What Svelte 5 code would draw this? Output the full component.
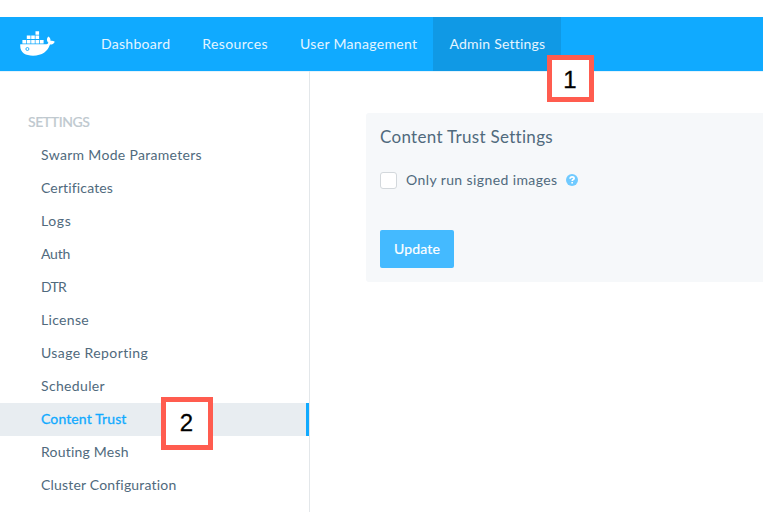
<script>
  const nav = [
    { label: 'Dashboard', x: 69.3 },
    { label: 'Resources', x: 65.7 },
    { label: 'User Management', x: 117.4 },
    { label: 'Admin Settings', x: 95.6, active: true }
  ];
  const items = [
    { label: 'Swarm Mode Parameters', x: 161 },
    { label: 'Certificates', x: 72 },
    { label: 'Logs', x: 30.5 },
    { label: 'Auth', x: 29 },
    { label: 'DTR', x: 25 },
    { label: 'License', x: 48 },
    { label: 'Usage Reporting', x: 107.5 },
    { label: 'Scheduler', x: 64 },
    { label: 'Content Trust', x: 85.5, active: true },
    { label: 'Routing Mesh', x: 88 },
    { label: 'Cluster Configuration', x: 135.5 }
  ];

  // Tracks a label out so that its text spans the given width.
  function span(node, width) {
    const natural = node.getBoundingClientRect().width;
    node.style.letterSpacing = `${(width - natural) / node.textContent.length}px`;
  }
</script>

<div class="page">
  <header>
    <svg class="logo" width="36" height="27" viewBox="0 0 36 27" fill="#fff">
      <path d="M.3 14.200H25.300c1.600 0 2.600-.5 3.100-1.500-1.900-1.800-2-4.300-.1-6.200 1.700 1.100 2.400 2.700 2.300 4.400 1.400-.3 2.900-.1 4.200.8-.9 1.900-2.500 2.900-4.800 2.900C27.600 21.500 22.300 25.700 13 25.700 5.300 25.700-.6 22.700.3 14.200Z" />
      <path d="M2.400 10h3.700v3.400H2.400zM6.800 10h3.700v3.400H6.800zM11.200 10h3.600v3.400h-3.600zM15.500 10h3.600v3.400h-3.600zM19.800 10h3.800v3.400h-3.800zM6.800 5.600h3.700V9H6.800zM11.200 5.600h3.600V9h-3.600zM15.500 5.600h3.600V9h-3.600zM15.500 1.200h3.600v3.500h-3.600z" />
      <circle cx="7.400" cy="19" r="1.500" fill="#fff" stroke="#10aaff" stroke-width=".9" />
    </svg>
    <nav>
      {#each nav as n}
        <a class:active={n.active}><span use:span={n.x}>{n.label}</span></a>
      {/each}
    </nav>
  </header>
  <div class="body">
    <aside>
      <h3><span use:span={61.5}>SETTINGS</span></h3>
      {#each items as i}
        <a class:active={i.active}><span use:span={i.x}>{i.label}</span></a>
      {/each}
    </aside>
    <main>
      <section>
        <h2><span use:span={172.5}>Content Trust Settings</span></h2>
        <div class="option">
          <i class="box"></i>
          <span use:span={151.5}>Only run signed images</span>
          <svg width="12" height="12" viewBox="0 0 12 12">
            <circle cx="6" cy="6" r="6" fill="#70caff" />
            <path d="M4.100 4.700C4.200 3.300 5 2.800 6.100 2.800c1.200 0 2 .6 2 1.600C8.100 5.700 6.200 5.500 6.200 7" fill="none" stroke="#fff" stroke-width="1.700" />
            <path d="M5.300 7.900H7v1.500H5.300z" fill="#fff" />
          </svg>
        </div>
        <button><span use:span={46}>Update</span></button>
      </section>
    </main>
  </div>
  <div class="callout one">1</div>
  <div class="callout two">2</div>
</div>

<style>
  .page {
    position: relative;
    width: 763px;
    height: 512px;
    overflow: hidden;
    box-sizing: border-box;
    padding-top: 17px;
    display: flex;
    flex-direction: column;
    background: #fff;
    color: #506a7d;
    font: 14px/20px Lato, 'Open Sans', sans-serif;
  }
  span { white-space: nowrap; }
  header {
    flex: none;
    height: 54px;
    display: flex;
    background: #10aaff;
    box-shadow: 0 1px #e4f3fc;
  }
  .logo { margin: 13px 0 0 20px; flex: none; }
  nav { display: flex; margin-left: 29px; }
  nav a {
    display: flex;
    align-items: center;
    padding: 0 16px 1px;
    color: #e4f5ff;
  }
  nav a.active { background: #1099e5; }
  .body { flex: 1; display: flex; min-height: 0; }
  aside {
    box-sizing: border-box;
    width: 310px;
    flex: none;
    border-right: 1px solid #e3e7ea;
    padding-top: 41px;
  }
  h3 {
    margin: 0 0 7px 28px;
    font-size: 14px;
    line-height: 20px;
    font-weight: 500;
    color: #c0c9cf;
    -webkit-text-stroke: .15px #c0c9cf;
  }
  aside a {
    box-sizing: border-box;
    display: flex;
    align-items: center;
    height: 33px;
    padding: 0 0 2px 41px;
  }
  aside a.active {
    background: #e8edf1;
    color: #10aaff;
    -webkit-text-stroke: .3px #10aaff;
    border-right: 3px solid #10aaff;
  }
  main { flex: 1; padding: 42px 0 0 56px; }
  section {
    box-sizing: border-box;
    height: 169px;
    padding: 12px 14px 14px;
    border-radius: 3px 0 0 3px;
    background: #f6f8fa;
    display: flex;
    flex-direction: column;
    align-items: flex-start;
  }
  h2 { margin: 0; font-size: 17px; line-height: 24px; font-weight: 400; }
  .option { display: flex; align-items: center; margin-top: 21px; }
  .box {
    box-sizing: border-box;
    width: 17px;
    height: 17px;
    margin-right: 9px;
    border: 1px solid #d3d8dc;
    border-radius: 3px;
    background: #fff;
  }
  .option svg { margin-left: 8.5px; }
  button {
    width: 74px;
    height: 38px;
    margin-top: auto;
    padding: 0;
    border: 0;
    border-radius: 2px;
    background: #44baff;
    color: #fff;
    font: inherit;
    -webkit-text-stroke: .2px #fff;
  }
  .callout {
    position: absolute;
    box-sizing: border-box;
    border: 5px solid #ff5c4f;
    background: #fff;
    color: #000;
    font: 24px/37px 'Liberation Sans', Arial, sans-serif;
    -webkit-text-stroke: .3px #000;
    text-align: center;
  }
  .one { left: 547px; top: 55px; width: 47px; height: 47px; line-height: 40px; padding-right: 1px; }
  .two { left: 161px; top: 397px; width: 52px; height: 53px; line-height: 41px; padding-right: 1px; }
</style>
